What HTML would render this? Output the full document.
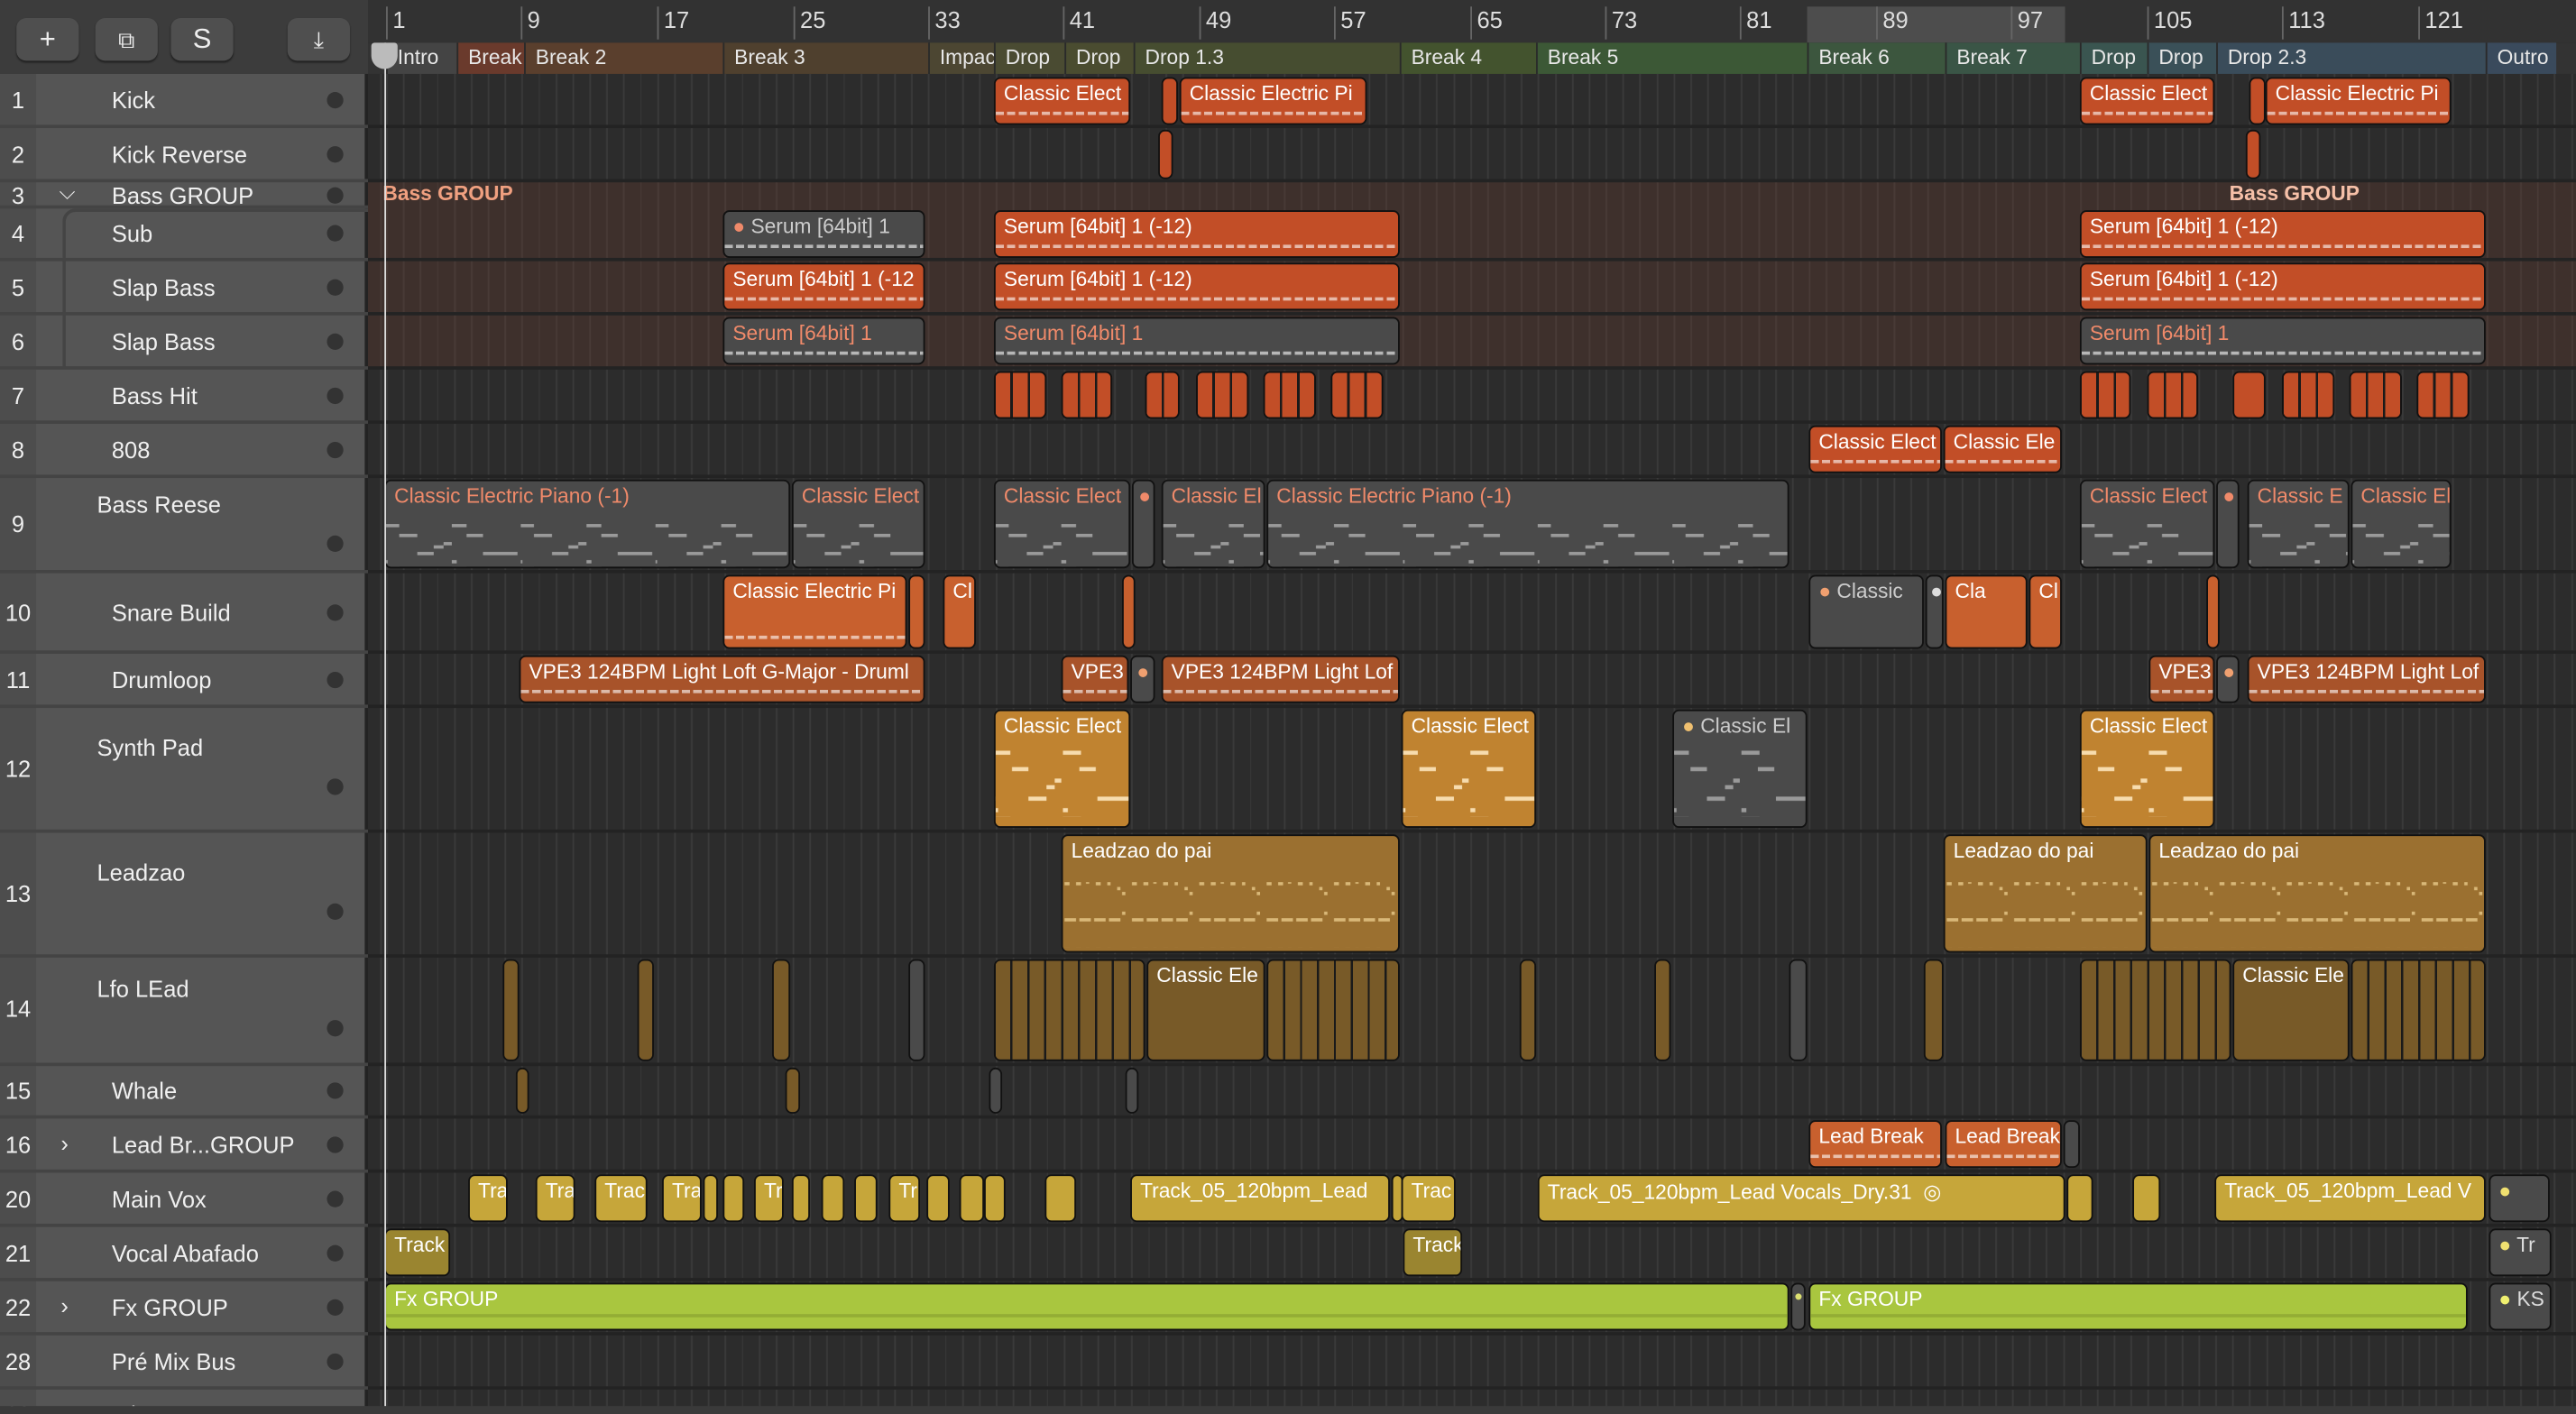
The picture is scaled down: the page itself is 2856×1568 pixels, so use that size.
<!DOCTYPE html>
<html><head><meta charset="utf-8"><style>
*{margin:0;padding:0;box-sizing:border-box}
html,body{width:2856px;height:1568px;overflow:hidden;background:#2a2a2a}
#w{position:absolute;left:0;top:0;width:1568px;height:861px;transform:scale(1.82143);transform-origin:0 0;font-family:"Liberation Sans",sans-serif;background:#2b2b2b;overflow:hidden}
.a{position:absolute}
.arr{position:absolute;left:224px;top:45px;width:1344px;height:816px;background-color:#2c2c2c;
background-image:repeating-linear-gradient(90deg,#3a3a3a 0 1px,transparent 1px 10.31px);background-position:11px 0}
.hl{position:absolute;left:224px;width:1344px;height:2px;background:#232323}
.tn{position:absolute;left:0;width:22px;color:#eee;font-size:14px;text-align:center}
.nm{position:absolute;left:68px;color:#f0f0f0;font-size:14px}
.dt{position:absolute;left:199px;width:10px;height:10px;border-radius:50%;background:#333}
.r{position:absolute;border-radius:4px;border:1px solid #111;overflow:hidden;white-space:nowrap;font-size:12.5px;padding:2px 0 0 5px;color:#fff}
.o{background:#c24e27}.g{background:#4a4a4a;color:#f08a6a}.go{background:#c08330}.ld{background:#9b7030}.br{background:#785a28}
.y{background:#c6a63a}.gr{background:#a9c63f}.bo{background:#a8532a}.gy{background:#4a4a4a;color:#ddd}
.mk{position:absolute;top:26px;height:19px;font-size:12.5px;color:#e8e8e8;padding:2px 0 0 6px;white-space:nowrap;overflow:hidden;border-left:1px solid #2a2a2a}
.rl{position:absolute;top:4px;font-size:14px;color:#ddd;padding-left:3px;border-left:1px solid #666;height:20px}
.btn{position:absolute;top:11px;width:38px;height:26px;background:#4f4f4f;border-radius:6px;color:#eee;text-align:center;font-size:17px;line-height:26px;box-shadow:0 1px 1px #222}
.dash{position:absolute;left:0;right:0;bottom:5px;height:2px;background:repeating-linear-gradient(90deg,rgba(255,255,255,.6) 0 5px,transparent 5px 7px)}
.nv{position:absolute;left:0;width:100%;overflow:visible}
</style></head><body>
<svg width="0" height="0" style="position:absolute"><defs>
<pattern id="p1" patternUnits="userSpaceOnUse" width="82" height="26"><g fill="#9a9a9a">
<rect x="0" y="0" width="8" height="2"/><rect x="40" y="0" width="9" height="2"/><rect x="8" y="6" width="11" height="2"/><rect x="49" y="6" width="10" height="2"/><rect x="35" y="11" width="5" height="2"/><rect x="29" y="13" width="6" height="2"/><rect x="19" y="17" width="10" height="2"/><rect x="59" y="17" width="21" height="2"/><rect x="0" y="22" width="1" height="2"/><rect x="40" y="22" width="3" height="2"/></g></pattern>
<pattern id="p2" patternUnits="userSpaceOnUse" width="82" height="40"><g fill="#f7dcae">
<rect x="0" y="0" width="9" height="2.5"/><rect x="41" y="0" width="11" height="2.5"/><rect x="10" y="10" width="10" height="2.5"/><rect x="51" y="10" width="10" height="2.5"/><rect x="36" y="17" width="4" height="2.5"/><rect x="31" y="21" width="5" height="2.5"/><rect x="20" y="28" width="11" height="2.5"/><rect x="62" y="28" width="20" height="2.5"/><rect x="0" y="35" width="1.5" height="2.5"/><rect x="41" y="35" width="3" height="2.5"/></g></pattern>
<pattern id="p3" patternUnits="userSpaceOnUse" width="82" height="40"><g fill="#9a9a9a">
<rect x="0" y="0" width="9" height="2.5"/><rect x="41" y="0" width="11" height="2.5"/><rect x="10" y="10" width="10" height="2.5"/><rect x="51" y="10" width="10" height="2.5"/><rect x="36" y="17" width="4" height="2.5"/><rect x="31" y="21" width="5" height="2.5"/><rect x="20" y="28" width="11" height="2.5"/><rect x="62" y="28" width="20" height="2.5"/><rect x="0" y="35" width="1.5" height="2.5"/><rect x="41" y="35" width="3" height="2.5"/></g></pattern>
<pattern id="p4" patternUnits="userSpaceOnUse" width="41" height="40"><g fill="#d9b878">
<rect x="1" y="0" width="3" height="2"/><rect x="8" y="0" width="3" height="2"/><rect x="14" y="-1" width="2" height="2"/><rect x="20" y="0" width="3" height="2"/><rect x="27" y="0" width="2" height="2"/><rect x="33" y="3" width="2" height="2"/><rect x="36" y="6" width="2" height="2"/><rect x="36" y="18" width="2" height="2"/><rect x="1" y="22" width="7" height="2"/><rect x="10" y="22" width="7" height="2"/><rect x="19" y="22" width="7" height="2"/><rect x="28" y="22" width="7" height="2"/></g></pattern>
</defs></svg>
<div id="w">
<div class="a" style="left:0;top:0;width:224px;height:45px;background:#3c3c3c"></div>
<div class="btn" style="left:10px">+</div>
<div class="btn" style="left:58px;font-size:14px">⧉</div>
<div class="btn" style="left:104px">S</div>
<div class="btn" style="left:175px;font-size:14px">⤓</div>
<div class="a" style="left:224px;top:0;width:1344px;height:26px;background:#323232"></div>
<div class="a" style="left:1100px;top:4px;width:157px;height:22px;background:#4d4d4d"></div>
<div class="rl" style="left:235px">1</div><div class="rl" style="left:317px">9</div><div class="rl" style="left:400px">17</div><div class="rl" style="left:483px">25</div><div class="rl" style="left:565px">33</div><div class="rl" style="left:647px">41</div><div class="rl" style="left:730px">49</div><div class="rl" style="left:812px">57</div><div class="rl" style="left:895px">65</div><div class="rl" style="left:977px">73</div><div class="rl" style="left:1059px">81</div><div class="rl" style="left:1142px">89</div><div class="rl" style="left:1224px">97</div><div class="rl" style="left:1307px">105</div><div class="rl" style="left:1389px">113</div><div class="rl" style="left:1472px">121</div>
<div class="a" style="left:224px;top:26px;width:1344px;height:19px;background:#333"></div>
<div class="mk" style="left:235px;width:43px;background:#444">Intro</div>
<div class="mk" style="left:278px;width:41px;background:#6a3a2c">Break</div>
<div class="mk" style="left:319px;width:121px;background:#5a3f2d">Break 2</div>
<div class="mk" style="left:440px;width:125px;background:#4f402e">Break 3</div>
<div class="mk" style="left:565px;width:40px;background:#4c4632">Impact</div>
<div class="mk" style="left:605px;width:43px;background:#4a4b32">Drop</div>
<div class="mk" style="left:648px;width:42px;background:#4a4c30">Drop</div>
<div class="mk" style="left:690px;width:162px;background:#464d30">Drop 1.3</div>
<div class="mk" style="left:852px;width:83px;background:#43532e">Break 4</div>
<div class="mk" style="left:935px;width:165px;background:#3c5836">Break 5</div>
<div class="mk" style="left:1100px;width:84px;background:#3c563e">Break 6</div>
<div class="mk" style="left:1184px;width:82px;background:#3a5546">Break 7</div>
<div class="mk" style="left:1266px;width:41px;background:#3a5550">Drop</div>
<div class="mk" style="left:1307px;width:42px;background:#3a5058">Drop</div>
<div class="mk" style="left:1349px;width:164px;background:#3a4c5a">Drop 2.3</div>
<div class="mk" style="left:1513px;width:43px;background:#3a4a5c">Outro</div>
<div class="a" style="left:0;top:45px;width:224px;height:816px;background:#555"></div>
<div class="a" style="left:0;top:45px;width:22px;height:816px;background:#4d4d4d"></div>
<div class="arr"></div>
<div class="a" style="left:224px;top:110px;width:1344px;height:114px;background:rgba(110,60,45,.28)"></div>
<div class="a" style="left:222px;top:45px;width:2px;height:816px;background:#232323"></div>
<div class="a" style="left:0;top:76px;width:224px;height:2px;background:#444"></div><div class="hl" style="top:76px"></div>
<div class="a" style="left:0;top:109px;width:224px;height:2px;background:#444"></div><div class="hl" style="top:109px"></div>
<div class="a" style="left:0;top:125px;width:224px;height:2px;background:#444"></div>
<div class="a" style="left:0;top:157px;width:224px;height:2px;background:#444"></div><div class="hl" style="top:157px"></div>
<div class="a" style="left:0;top:190px;width:224px;height:2px;background:#444"></div><div class="hl" style="top:190px"></div>
<div class="a" style="left:0;top:223px;width:224px;height:2px;background:#444"></div><div class="hl" style="top:223px"></div>
<div class="a" style="left:0;top:256px;width:224px;height:2px;background:#444"></div><div class="hl" style="top:256px"></div>
<div class="a" style="left:0;top:289px;width:224px;height:2px;background:#444"></div><div class="hl" style="top:289px"></div>
<div class="a" style="left:0;top:347px;width:224px;height:2px;background:#444"></div><div class="hl" style="top:347px"></div>
<div class="a" style="left:0;top:396px;width:224px;height:2px;background:#444"></div><div class="hl" style="top:396px"></div>
<div class="a" style="left:0;top:429px;width:224px;height:2px;background:#444"></div><div class="hl" style="top:429px"></div>
<div class="a" style="left:0;top:505px;width:224px;height:2px;background:#444"></div><div class="hl" style="top:505px"></div>
<div class="a" style="left:0;top:581px;width:224px;height:2px;background:#444"></div><div class="hl" style="top:581px"></div>
<div class="a" style="left:0;top:647px;width:224px;height:2px;background:#444"></div><div class="hl" style="top:647px"></div>
<div class="a" style="left:0;top:679px;width:224px;height:2px;background:#444"></div><div class="hl" style="top:679px"></div>
<div class="a" style="left:0;top:712px;width:224px;height:2px;background:#444"></div><div class="hl" style="top:712px"></div>
<div class="a" style="left:0;top:745px;width:224px;height:2px;background:#444"></div><div class="hl" style="top:745px"></div>
<div class="a" style="left:0;top:778px;width:224px;height:2px;background:#444"></div><div class="hl" style="top:778px"></div>
<div class="a" style="left:0;top:811px;width:224px;height:2px;background:#444"></div><div class="hl" style="top:811px"></div>
<div class="a" style="left:0;top:844px;width:224px;height:2px;background:#444"></div><div class="hl" style="top:844px"></div>
<div class="a" style="left:38px;top:127px;width:186px;height:97px;border-left:2px solid #444;border-top:2px solid #444;border-radius:8px 0 0 0"></div>
<div class="tn" style="top:53px">1</div><div class="nm" style="top:53px">Kick</div><div class="dt" style="top:56px"></div>
<div class="tn" style="top:86px">2</div><div class="nm" style="top:86px">Kick Reverse</div><div class="dt" style="top:89px"></div>
<div class="tn" style="top:111px">3</div><div class="a" style="left:36px;top:109px;color:#eee;font-size:13px">⌵</div><div class="nm" style="top:111px">Bass GROUP</div><div class="dt" style="top:114px"></div>
<div class="tn" style="top:134px">4</div><div class="nm" style="top:134px">Sub</div><div class="dt" style="top:137px"></div>
<div class="tn" style="top:167px">5</div><div class="nm" style="top:167px">Slap Bass</div><div class="dt" style="top:170px"></div>
<div class="tn" style="top:200px">6</div><div class="nm" style="top:200px">Slap Bass</div><div class="dt" style="top:203px"></div>
<div class="tn" style="top:233px">7</div><div class="nm" style="top:233px">Bass Hit</div><div class="dt" style="top:236px"></div>
<div class="tn" style="top:266px">8</div><div class="nm" style="top:266px">808</div><div class="dt" style="top:269px"></div>
<div class="tn" style="top:311px">9</div><div class="nm" style="top:299px;left:59px">Bass Reese</div><div class="dt" style="top:326px"></div>
<div class="tn" style="top:365px">10</div><div class="nm" style="top:365px">Snare Build</div><div class="dt" style="top:368px"></div>
<div class="tn" style="top:406px">11</div><div class="nm" style="top:406px">Drumloop</div><div class="dt" style="top:409px"></div>
<div class="tn" style="top:460px">12</div><div class="nm" style="top:447px;left:59px">Synth Pad</div><div class="dt" style="top:474px"></div>
<div class="tn" style="top:536px">13</div><div class="nm" style="top:523px;left:59px">Leadzao</div><div class="dt" style="top:550px"></div>
<div class="tn" style="top:606px">14</div><div class="nm" style="top:594px;left:59px">Lfo LEad</div><div class="dt" style="top:621px"></div>
<div class="tn" style="top:656px">15</div><div class="nm" style="top:656px">Whale</div><div class="dt" style="top:659px"></div>
<div class="tn" style="top:689px">16</div><div class="a" style="left:37px;top:688px;color:#eee;font-size:14px">›</div><div class="nm" style="top:689px">Lead Br...GROUP</div><div class="dt" style="top:692px"></div>
<div class="tn" style="top:722px">20</div><div class="nm" style="top:722px">Main Vox</div><div class="dt" style="top:725px"></div>
<div class="tn" style="top:755px">21</div><div class="nm" style="top:755px">Vocal Abafado</div><div class="dt" style="top:758px"></div>
<div class="tn" style="top:788px">22</div><div class="a" style="left:37px;top:787px;color:#eee;font-size:14px">›</div><div class="nm" style="top:788px">Fx GROUP</div><div class="dt" style="top:791px"></div>
<div class="tn" style="top:821px">28</div><div class="nm" style="top:821px">Pré Mix Bus</div><div class="dt" style="top:824px"></div>
<div class="tn" style="top:853px">29</div><div class="nm" style="top:853px">Mix Bus</div>
<div class="a" style="left:0;top:856px;width:1568px;height:5px;background:#3a3a3a"></div>
<div class="a" style="left:233px;top:111px;font-size:12.5px;font-weight:bold;color:#f0a080">Bass GROUP</div>
<div class="a" style="left:1357px;top:111px;font-size:12.5px;font-weight:bold;color:#f6c0a8">Bass GROUP</div>
<!-- row1 -->
<div class="r o" style="left:605px;top:47px;width:83px;height:29px">Classic Elect<div class="dash"></div></div>
<div class="r o" style="left:707px;top:47px;width:10px;height:29px"></div>
<div class="r o" style="left:718px;top:47px;width:114px;height:29px">Classic Electric Pi<div class="dash"></div></div>
<div class="r o" style="left:1266px;top:47px;width:82px;height:29px">Classic Elect<div class="dash"></div></div>
<div class="r o" style="left:1369px;top:47px;width:10px;height:29px"></div>
<div class="r o" style="left:1379px;top:47px;width:113px;height:29px">Classic Electric Pi<div class="dash"></div></div>
<div class="r o" style="left:705px;top:79px;width:9px;height:30px"></div>
<div class="r o" style="left:1367px;top:79px;width:9px;height:30px"></div>
<!-- rows 4-6 -->
<div class="r g" style="left:440px;top:128px;width:123px;height:29px;color:#ccc"><span style="color:#f08a6a">●</span> Serum [64bit] 1<div class="dash"></div></div>
<div class="r o" style="left:605px;top:128px;width:247px;height:29px">Serum [64bit] 1 (-12)<div class="dash"></div></div>
<div class="r o" style="left:1266px;top:128px;width:247px;height:29px">Serum [64bit] 1 (-12)<div class="dash"></div></div>
<div class="r o" style="left:440px;top:160px;width:123px;height:29px">Serum [64bit] 1 (-12<div class="dash"></div></div>
<div class="r o" style="left:605px;top:160px;width:247px;height:29px">Serum [64bit] 1 (-12)<div class="dash"></div></div>
<div class="r o" style="left:1266px;top:160px;width:247px;height:29px">Serum [64bit] 1 (-12)<div class="dash"></div></div>
<div class="r g" style="left:440px;top:193px;width:123px;height:29px">Serum [64bit] 1<div class="dash"></div></div>
<div class="r g" style="left:605px;top:193px;width:247px;height:29px">Serum [64bit] 1<div class="dash"></div></div>
<div class="r g" style="left:1266px;top:193px;width:247px;height:29px">Serum [64bit] 1<div class="dash"></div></div>
<!-- row7 -->
<div class="r o" style="left:605px;top:226px;width:32px;height:29px;background:repeating-linear-gradient(90deg,#c24e27 0 9px,#1a1a1a 9px 10.5px)"></div>
<div class="r o" style="left:646px;top:226px;width:31px;height:29px;background:repeating-linear-gradient(90deg,#c24e27 0 9px,#1a1a1a 9px 10.5px)"></div>
<div class="r o" style="left:697px;top:226px;width:21px;height:29px;background:repeating-linear-gradient(90deg,#c24e27 0 9px,#1a1a1a 9px 10.5px)"></div>
<div class="r o" style="left:728px;top:226px;width:32px;height:29px;background:repeating-linear-gradient(90deg,#c24e27 0 9px,#1a1a1a 9px 10.5px)"></div>
<div class="r o" style="left:769px;top:226px;width:32px;height:29px;background:repeating-linear-gradient(90deg,#c24e27 0 9px,#1a1a1a 9px 10.5px)"></div>
<div class="r o" style="left:810px;top:226px;width:32px;height:29px;background:repeating-linear-gradient(90deg,#c24e27 0 9px,#1a1a1a 9px 10.5px)"></div>
<div class="r o" style="left:1266px;top:226px;width:31px;height:29px;background:repeating-linear-gradient(90deg,#c24e27 0 9px,#1a1a1a 9px 10.5px)"></div>
<div class="r o" style="left:1307px;top:226px;width:31px;height:29px;background:repeating-linear-gradient(90deg,#c24e27 0 9px,#1a1a1a 9px 10.5px)"></div>
<div class="r o" style="left:1359px;top:226px;width:20px;height:29px"></div>
<div class="r o" style="left:1389px;top:226px;width:32px;height:29px;background:repeating-linear-gradient(90deg,#c24e27 0 9px,#1a1a1a 9px 10.5px)"></div>
<div class="r o" style="left:1430px;top:226px;width:32px;height:29px;background:repeating-linear-gradient(90deg,#c24e27 0 9px,#1a1a1a 9px 10.5px)"></div>
<div class="r o" style="left:1471px;top:226px;width:32px;height:29px;background:repeating-linear-gradient(90deg,#c24e27 0 9px,#1a1a1a 9px 10.5px)"></div>
<!-- row8 -->
<div class="r o" style="left:1101px;top:259px;width:81px;height:29px">Classic Elect<div class="dash"></div></div>
<div class="r o" style="left:1183px;top:259px;width:72px;height:29px">Classic Ele<div class="dash"></div></div>
<!-- row9 -->
<div class="r g" style="left:234px;top:292px;width:247px;height:54px">Classic Electric Piano (-1)<svg class="nv" style="top:26px" height="26"><rect width="100%" height="26" fill="url(#p1)"/></svg></div>
<div class="r g" style="left:482px;top:292px;width:81px;height:54px">Classic Elect<svg class="nv" style="top:26px" height="26"><rect width="100%" height="26" fill="url(#p1)"/></svg></div>
<div class="r g" style="left:605px;top:292px;width:83px;height:54px">Classic Elect<svg class="nv" style="top:26px" height="26"><rect width="100%" height="26" fill="url(#p1)"/></svg></div>
<div class="r g" style="left:689px;top:292px;width:14px;height:54px;padding-left:3px">●</div>
<div class="r g" style="left:707px;top:292px;width:63px;height:54px">Classic El<svg class="nv" style="top:26px" height="26"><rect width="100%" height="26" fill="url(#p1)"/></svg></div>
<div class="r g" style="left:771px;top:292px;width:318px;height:54px">Classic Electric Piano (-1)<svg class="nv" style="top:26px" height="26"><rect width="100%" height="26" fill="url(#p1)"/></svg></div>
<div class="r g" style="left:1266px;top:292px;width:82px;height:54px">Classic Elect<svg class="nv" style="top:26px" height="26"><rect width="100%" height="26" fill="url(#p1)"/></svg></div>
<div class="r g" style="left:1349px;top:292px;width:14px;height:54px;padding-left:3px">●</div>
<div class="r g" style="left:1368px;top:292px;width:62px;height:54px">Classic E<svg class="nv" style="top:26px" height="26"><rect width="100%" height="26" fill="url(#p1)"/></svg></div>
<div class="r g" style="left:1431px;top:292px;width:61px;height:54px">Classic El<svg class="nv" style="top:26px" height="26"><rect width="100%" height="26" fill="url(#p1)"/></svg></div>
<!-- row10 -->
<div class="r o" style="left:440px;top:350px;width:112px;height:45px;background:#c8602e">Classic Electric Pi<div class="dash"></div></div>
<div class="r o" style="left:553px;top:350px;width:10px;height:45px;background:#c8602e"></div>
<div class="r o" style="left:574px;top:350px;width:20px;height:45px;background:#c8602e">Cl</div>
<div class="r o" style="left:683px;top:350px;width:8px;height:45px;background:#c8602e"></div>
<div class="r gy" style="left:1101px;top:350px;width:70px;height:45px;color:#ccc"><span style="color:#f0a070">●</span> Classic</div>
<div class="r gy" style="left:1172px;top:350px;width:11px;height:45px;padding-left:2px">●</div>
<div class="r o" style="left:1184px;top:350px;width:50px;height:45px;background:#c8602e">Cla</div>
<div class="r o" style="left:1235px;top:350px;width:20px;height:45px;background:#c8602e">Cl</div>
<div class="r o" style="left:1343px;top:350px;width:8px;height:45px;background:#c8602e"></div>
<!-- row11 -->
<div class="r bo" style="left:316px;top:399px;width:247px;height:29px">VPE3 124BPM Light Loft G-Major - Druml<div class="dash"></div></div>
<div class="r bo" style="left:646px;top:399px;width:41px;height:29px">VPE3<div class="dash"></div></div>
<div class="r gy" style="left:688px;top:399px;width:15px;height:29px;color:#f0a070;padding-left:3px">●</div>
<div class="r bo" style="left:707px;top:399px;width:145px;height:29px">VPE3 124BPM Light Lof<div class="dash"></div></div>
<div class="r bo" style="left:1308px;top:399px;width:40px;height:29px">VPE3<div class="dash"></div></div>
<div class="r gy" style="left:1349px;top:399px;width:14px;height:29px;color:#f0a070;padding-left:3px">●</div>
<div class="r bo" style="left:1368px;top:399px;width:145px;height:29px">VPE3 124BPM Light Lof<div class="dash"></div></div>
<!-- row12 -->
<div class="r go" style="left:605px;top:432px;width:83px;height:72px">Classic Elect<svg class="nv" style="top:24px" height="40"><rect width="100%" height="40" fill="url(#p2)"/></svg></div>
<div class="r go" style="left:853px;top:432px;width:82px;height:72px">Classic Elect<svg class="nv" style="top:24px" height="40"><rect width="100%" height="40" fill="url(#p2)"/></svg></div>
<div class="r gy" style="left:1018px;top:432px;width:82px;height:72px;color:#ccc"><span style="color:#f0c070">●</span> Classic El<svg class="nv" style="top:24px" height="40"><rect width="100%" height="40" fill="url(#p3)"/></svg></div>
<div class="r go" style="left:1266px;top:432px;width:82px;height:72px">Classic Elect<svg class="nv" style="top:24px" height="40"><rect width="100%" height="40" fill="url(#p2)"/></svg></div>
<!-- row13 -->
<div class="r ld" style="left:646px;top:508px;width:206px;height:72px">Leadzao do pai<svg class="nv" style="top:28px" height="40"><rect width="100%" height="40" fill="url(#p4)"/></svg></div>
<div class="r ld" style="left:1183px;top:508px;width:124px;height:72px">Leadzao do pai<svg class="nv" style="top:28px" height="40"><rect width="100%" height="40" fill="url(#p4)"/></svg></div>
<div class="r ld" style="left:1308px;top:508px;width:205px;height:72px">Leadzao do pai<svg class="nv" style="top:28px" height="40"><rect width="100%" height="40" fill="url(#p4)"/></svg></div>
<!-- row14 -->
<div class="r br" style="left:306px;top:584px;width:10px;height:62px"></div>
<div class="r br" style="left:388px;top:584px;width:10px;height:62px"></div>
<div class="r br" style="left:470px;top:584px;width:11px;height:62px"></div>
<div class="r gy" style="left:553px;top:584px;width:10px;height:62px"></div>
<div class="r br" style="left:605px;top:584px;width:92px;height:62px;background:repeating-linear-gradient(90deg,#785a28 0 9px,#1a1a1a 9px 10.3px)"></div>
<div class="r br" style="left:698px;top:584px;width:72px;height:62px">Classic Ele</div>
<div class="r br" style="left:771px;top:584px;width:81px;height:62px;background:repeating-linear-gradient(90deg,#785a28 0 9px,#1a1a1a 9px 10.3px)"></div>
<div class="r br" style="left:925px;top:584px;width:10px;height:62px"></div>
<div class="r br" style="left:1007px;top:584px;width:10px;height:62px"></div>
<div class="r gy" style="left:1089px;top:584px;width:11px;height:62px"></div>
<div class="r br" style="left:1171px;top:584px;width:12px;height:62px"></div>
<div class="r br" style="left:1266px;top:584px;width:92px;height:62px;background:repeating-linear-gradient(90deg,#785a28 0 9px,#1a1a1a 9px 10.3px)"></div>
<div class="r br" style="left:1359px;top:584px;width:71px;height:62px">Classic Ele</div>
<div class="r br" style="left:1431px;top:584px;width:82px;height:62px;background:repeating-linear-gradient(90deg,#785a28 0 9px,#1a1a1a 9px 10.3px)"></div>
<!-- row15 -->
<div class="r br" style="left:314px;top:650px;width:8px;height:28px"></div>
<div class="r br" style="left:478px;top:650px;width:9px;height:28px"></div>
<div class="r gy" style="left:602px;top:650px;width:8px;height:28px"></div>
<div class="r gy" style="left:685px;top:650px;width:8px;height:28px"></div>
<!-- row16 -->
<div class="r o" style="left:1101px;top:682px;width:81px;height:29px;background:#c8602e">Lead Break<div class="dash"></div></div>
<div class="r o" style="left:1184px;top:682px;width:71px;height:29px;background:#c8602e">Lead Break<div class="dash"></div></div>
<div class="r gy" style="left:1256px;top:682px;width:10px;height:29px"></div>
<!-- row20 -->
<div class="r y" style="left:285px;top:715px;width:24px;height:29px">Tra</div>
<div class="r y" style="left:326px;top:715px;width:24px;height:29px">Tra</div>
<div class="r y" style="left:362px;top:715px;width:32px;height:29px">Trac</div>
<div class="r y" style="left:403px;top:715px;width:24px;height:29px">Tra</div>
<div class="r y" style="left:428px;top:715px;width:9px;height:29px"></div>
<div class="r y" style="left:440px;top:715px;width:13px;height:29px"></div>
<div class="r y" style="left:459px;top:715px;width:18px;height:29px">Tr</div>
<div class="r y" style="left:482px;top:715px;width:11px;height:29px"></div>
<div class="r y" style="left:500px;top:715px;width:14px;height:29px"></div>
<div class="r y" style="left:520px;top:715px;width:14px;height:29px"></div>
<div class="r y" style="left:541px;top:715px;width:19px;height:29px">Tr</div>
<div class="r y" style="left:564px;top:715px;width:14px;height:29px"></div>
<div class="r y" style="left:584px;top:715px;width:15px;height:29px"></div>
<div class="r y" style="left:599px;top:715px;width:13px;height:29px"></div>
<div class="r y" style="left:636px;top:715px;width:19px;height:29px"></div>
<div class="r y" style="left:688px;top:715px;width:158px;height:29px">Track_05_120bpm_Lead</div>
<div class="r y" style="left:847px;top:715px;width:6px;height:29px"></div>
<div class="r y" style="left:853px;top:715px;width:33px;height:29px">Trac</div>
<div class="r y" style="left:936px;top:715px;width:321px;height:29px">Track_05_120bpm_Lead Vocals_Dry.31 &nbsp;◎</div>
<div class="r y" style="left:1258px;top:715px;width:16px;height:29px"></div>
<div class="r y" style="left:1298px;top:715px;width:17px;height:29px"></div>
<div class="r y" style="left:1348px;top:715px;width:165px;height:29px">Track_05_120bpm_Lead V</div>
<div class="r gy" style="left:1515px;top:715px;width:37px;height:29px;color:#f0e070">●</div>
<!-- row21 -->
<div class="r y" style="left:234px;top:748px;width:40px;height:29px;background:#9a8530">Track</div>
<div class="r y" style="left:854px;top:748px;width:36px;height:29px;background:#9a8530">Track</div>
<div class="r gy" style="left:1515px;top:748px;width:38px;height:29px"><span style="color:#f0e070">●</span> Tr</div>
<!-- row22 -->
<div class="r gr" style="left:234px;top:781px;width:855px;height:29px">Fx GROUP<div class="a" style="left:0;right:0;top:18px;height:2px;background:#93ad35"></div></div>
<div class="r gy" style="left:1090px;top:781px;width:9px;height:29px;padding-left:1px;color:#dde070;font-size:9px">●</div>
<div class="r gr" style="left:1101px;top:781px;width:401px;height:29px">Fx GROUP<div class="a" style="left:0;right:0;top:18px;height:2px;background:#93ad35"></div></div>
<div class="r gy" style="left:1515px;top:781px;width:38px;height:29px"><span style="color:#f0f070">●</span> KS</div>
<div class="a" style="left:234px;top:26px;width:1px;height:830px;background:#ddd"></div>
<div class="a" style="left:226px;top:26px;width:16px;height:16px;background:#bbb;border-radius:2px 2px 8px 8px"></div>
</div></body></html>
